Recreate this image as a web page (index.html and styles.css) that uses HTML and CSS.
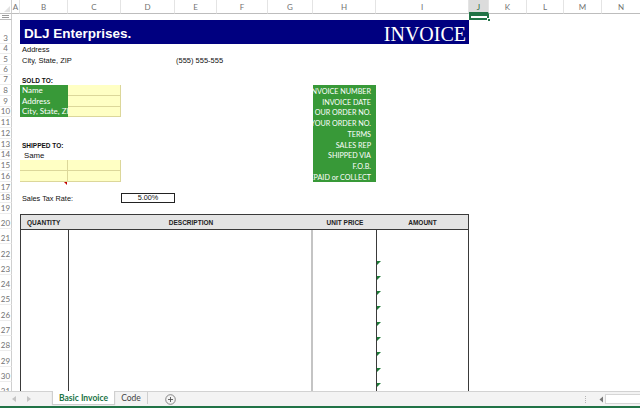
FILE: index.html
```html
<!DOCTYPE html>
<html lang="en">
<head>
<meta charset="UTF-8">
<meta name="viewport" content="width=device-width, initial-scale=1.0">
<title>Basic Invoice</title>
<link rel="stylesheet" href="styles.css">
</head>
<body>
<div class="workbook">
    <div class="sheet">
        <!-- column headers -->
        <div class="corner"></div>
        <div class="colhead">A</div>
        <div class="colhead">B</div>
        <div class="colhead">C</div>
        <div class="colhead">D</div>
        <div class="colhead">E</div>
        <div class="colhead">F</div>
        <div class="colhead">G</div>
        <div class="colhead">H</div>
        <div class="colhead">I</div>
        <div class="colhead active">J</div>
        <div class="colhead">K</div>
        <div class="colhead">L</div>
        <div class="colhead">M</div>
        <div class="colhead">N</div>

        <!-- row headers (rows 1-2 are hidden) -->
        <div class="rowhead hidden-rows"><span class="fold"></span></div>
        <div class="rowhead">3</div>
        <div class="rowhead">4</div>
        <div class="rowhead">5</div>
        <div class="rowhead">6</div>
        <div class="rowhead">7</div>
        <div class="rowhead">8</div>
        <div class="rowhead">9</div>
        <div class="rowhead">10</div>
        <div class="rowhead">11</div>
        <div class="rowhead">12</div>
        <div class="rowhead">13</div>
        <div class="rowhead">14</div>
        <div class="rowhead">15</div>
        <div class="rowhead">16</div>
        <div class="rowhead">17</div>
        <div class="rowhead">18</div>
        <div class="rowhead">19</div>
        <div class="rowhead">20</div>
        <div class="rowhead">21</div>
        <div class="rowhead">22</div>
        <div class="rowhead">23</div>
        <div class="rowhead">24</div>
        <div class="rowhead">25</div>
        <div class="rowhead">26</div>
        <div class="rowhead">27</div>
        <div class="rowhead">28</div>
        <div class="rowhead">29</div>
        <div class="rowhead">30</div>
        <div class="rowhead">31</div>

        <div class="selection"><span class="handle"></span></div>

        <!-- invoice -->
        <div class="title">
            <span class="company">DLJ Enterprises.</span>
            <span class="doc-name">INVOICE</span>
        </div>
        <div class="cell address">Address</div>
        <div class="cell city">City, State, ZIP</div>
        <div class="cell phone">(555) 555-555</div>

        <div class="cell caption sold-head">SOLD TO:</div>
        <div class="entry sold">
            <div class="label">Name</div><div class="input"></div>
            <div class="label">Address</div><div class="input"></div>
            <div class="label">City, State, ZIP</div><div class="input"></div>
        </div>

        <div class="cell caption ship-head">SHIPPED TO:</div>
        <div class="cell ship-same">Same</div>
        <div class="entry ship">
            <div class="input"></div><div class="input"></div>
            <div class="input"></div><div class="input"></div>
        </div>
        <div class="note-mark"></div>

        <div class="cell tax-label">Sales Tax Rate:</div>
        <div class="tax-rate">5.00%</div>

        <div class="details">
            <div class="line"><span>INVOICE NUMBER</span></div>
            <div class="line"><span>INVOICE DATE</span></div>
            <div class="line"><span>OUR ORDER NO.</span></div>
            <div class="line"><span>YOUR ORDER NO.</span></div>
            <div class="line"><span>TERMS</span></div>
            <div class="line"><span>SALES REP</span></div>
            <div class="line"><span>SHIPPED VIA</span></div>
            <div class="line"><span>F.O.B.</span></div>
            <div class="line"><span>PREPAID or COLLECT</span></div>
        </div>

        <div class="items">
            <div class="th qty">QUANTITY</div>
            <div class="th">DESCRIPTION</div>
            <div class="th">UNIT PRICE</div>
            <div class="th">AMOUNT</div>
            <div class="td qty"></div>
            <div class="td desc"></div>
            <div class="td price"></div>
            <div class="td amount">
                <div class="amt"></div>
                <div class="amt"></div>
                <div class="amt flag"></div>
                <div class="amt flag"></div>
                <div class="amt flag"></div>
                <div class="amt flag"></div>
                <div class="amt flag"></div>
                <div class="amt flag"></div>
                <div class="amt flag"></div>
                <div class="amt flag"></div>
                <div class="amt flag"></div>
            </div>
        </div>
    </div>

    <div class="tabbar">
        <div class="tab-nav">
            <svg width="5" height="6" viewBox="0 0 5 6"><path d="M4 0 L0 3 L4 6 Z" fill="#c4c4c4"/></svg>
            <svg width="5" height="6" viewBox="0 0 5 6"><path d="M1 0 L5 3 L1 6 Z" fill="#c4c4c4"/></svg>
        </div>
        <div class="tab active">Basic Invoice</div>
        <div class="tab">Code</div>
        <div class="tab-add">
            <svg width="11" height="11" viewBox="0 0 11 11">
                <circle cx="5.5" cy="5.5" r="4.8" fill="none" stroke="#7a7a7a" stroke-width="0.9"/>
                <path d="M5.5 3 V8 M3 5.5 H8" stroke="#555" stroke-width="0.9"/>
            </svg>
        </div>
        <div class="hscroll">
            <span class="grip"></span>
            <svg width="6" height="9" viewBox="0 0 6 9"><path d="M5 1.5 L1.5 4.5 L5 7.5 Z" fill="#777"/></svg>
            <div class="track"></div>
        </div>
    </div>
    <div class="statusbar"></div>
</div>
</body>
</html>
```

FILE: styles.css
```css
* {
    box-sizing: border-box;
}
html, body {
    margin: 0;
}
body {
    width: 640px;
    height: 408px;
    overflow: hidden;
    background-color: #fff;
    color: #111;
    font-family: "Liberation Sans", Arial, sans-serif;
}
.workbook {
    display: flex;
    flex-direction: column;
    height: 408px;
}

/* sheet grid: row header + columns A..N, rows 1..31 */
.sheet {
    flex: 1;
    min-height: 0;
    overflow: hidden;
    display: grid;
    grid-template-columns: 12px 8px 48px 53px 54px 42px 51px 45px 63px 93px 20px 38px 37px 38px 39px;
    grid-template-rows: 14px 6px 24px repeat(4, 10.25px) repeat(12, 10.75px) 15px repeat(11, 15.3px);
}
.corner,
.colhead {
    grid-row: 1;
}
.corner {
    position: relative;
    border-right: 1px solid #cfcfcf;
    border-bottom: 1px solid #bdbdbd;
}
.corner::after {
    content: "";
    position: absolute;
    right: 1px;
    bottom: 1px;
    border-left: 6px solid transparent;
    border-bottom: 6px solid #e2e2e2;
}
.colhead {
    display: flex;
    align-items: center;
    justify-content: center;
    padding-top: 1px;
    font: 8px "Lato", sans-serif;
    color: #727272;
    border-right: 1px solid #e4e4e4;
    border-bottom: 1px solid #bdbdbd;
}
.colhead.active {
    background-color: #dcdcdc;
    color: #2c6b3f;
    border-bottom: 2px solid #217346;
}
.rowhead {
    grid-column: 1;
    display: flex;
    align-items: flex-end;
    justify-content: center;
    padding-bottom: 1px;
    font: 8px/8px "Lato", sans-serif;
    color: #727272;
    border-right: 1px solid #cfcfcf;
    border-bottom: 1px solid #ececec;
}
.hidden-rows {
    align-items: center;
    border-bottom: 1px solid #bdbdbd;
}
.fold {
    width: 7px;
    height: 3px;
    border-top: 1px solid #9a9a9a;
    border-bottom: 1px solid #9a9a9a;
}
.selection {
    grid-area: 2 / 11 / 3 / 12;
    position: relative;
    border: 2px solid #217346;
}
.handle {
    position: absolute;
    right: -4px;
    bottom: -4px;
    width: 4px;
    height: 4px;
    background-color: #217346;
    border: 1px solid #fff;
}

/* cells */
.cell {
    display: flex;
    align-items: flex-end;
    white-space: nowrap;
    overflow: hidden;
    padding-left: 2px;
    font-size: 7.5px;
    line-height: 9px;
}
.caption {
    font-weight: bold;
    font-size: 6.5px;
}
.title {
    grid-area: 3 / 3 / 4 / 11;
    display: flex;
    justify-content: space-between;
    align-items: flex-end;
    padding: 0 3px 0 4px;
    background-color: #000080;
    color: #fff;
}
.company {
    font: bold 13.5px/1 "Liberation Sans", Arial, sans-serif;
    margin-bottom: 4px;
}
.doc-name {
    font: 20px/1 "Liberation Serif", "Times New Roman", serif;
}
.address { grid-area: 4 / 3 / 5 / 6; }
.city { grid-area: 5 / 3 / 6 / 6; }
.phone { grid-area: 5 / 6 / 6 / 9; padding-left: 1px; }
.sold-head { grid-area: 7 / 3 / 8 / 6; }
.ship-head { grid-area: 13 / 3 / 14 / 6; }
.ship-same { grid-area: 14 / 3 / 15 / 6; padding-left: 4px; font-size: 7.8px; }
.tax-label { grid-area: 18 / 3 / 19 / 5; font-size: 7.3px; }

.entry {
    display: grid;
    grid-template-columns: 48px 53px;
}
.sold {
    grid-area: 8 / 3 / 11 / 5;
    grid-template-rows: repeat(3, 1fr);
}
.ship {
    grid-area: 15 / 3 / 17 / 5;
    grid-template-rows: repeat(2, 1fr);
}
.label {
    display: flex;
    align-items: flex-end;
    padding: 0 0 1px 2px;
    overflow: hidden;
    white-space: nowrap;
    background-color: #389938;
    color: #fff;
    font: 8px/9px "Lato", sans-serif;
}
.input {
    background-color: #ffffc4;
    border-bottom: 1px solid #dcd79a;
    border-right: 1px solid #dcd79a;
}
.note-mark {
    grid-area: 17 / 3 / 18 / 4;
    justify-self: end;
    align-self: start;
    margin-right: 1px;
    border-left: 3px solid transparent;
    border-top: 3px solid #c00000;
}
.tax-rate {
    grid-area: 18 / 5 / 19 / 6;
    display: flex;
    align-items: center;
    justify-content: center;
    border: 1px solid #222;
    font-size: 7.3px;
}

.details {
    grid-area: 8 / 9 / 17 / 10;
    display: flex;
    flex-direction: column;
    background-color: #389938;
    color: #fff;
    font: 7.2px "Lato", sans-serif;
}
.details .line {
    flex: 1;
    display: flex;
    align-items: flex-end;
    justify-content: flex-end;
    overflow: hidden;
    white-space: nowrap;
    padding-right: 5px;
    line-height: 9px;
}
.details .line span {
    flex-shrink: 0;
}

/* line items */
.items {
    grid-area: 20 / 3 / 32 / 11;
    display: grid;
    grid-template-columns: 48px 244px 64px 1fr;
    grid-template-rows: 15px 1fr;
    border: 1px solid #3a3a3a;
}
.th {
    display: flex;
    align-items: center;
    justify-content: center;
    background-color: #e4e4e4;
    border-bottom: 1px solid #3a3a3a;
    font-size: 6.5px;
    font-weight: bold;
    color: #222;
    white-space: nowrap;
}
.th.qty {
    justify-content: flex-start;
    padding-left: 6px;
}
.td.qty {
    border-right: 1px solid #3a3a3a;
}
.td.desc {
    border-right: 2px solid #c4c4c4;
}
.td.price {
    border-right: 1px solid #3a3a3a;
}
.amount {
    display: flex;
    flex-direction: column;
}
.amt {
    height: 15.3px;
    flex-shrink: 0;
    position: relative;
}
.amt.flag::before {
    content: "";
    position: absolute;
    left: 0;
    top: 0;
    border-top: 4px solid #1d7a37;
    border-right: 4px solid transparent;
}

/* sheet tabs */
.tabbar {
    height: 15px;
    flex-shrink: 0;
    display: flex;
    align-items: stretch;
    background-color: #f3f3f3;
    border-top: 1px solid #d2d2d2;
    font-family: "Lato", sans-serif;
}
.tab-nav {
    width: 52px;
    display: flex;
    align-items: center;
    gap: 9px;
    padding-left: 12px;
}
.tab {
    display: flex;
    align-items: center;
    justify-content: center;
    font-size: 8.5px;
    color: #444;
    border-right: 1px solid #cfcfcf;
    margin-bottom: 2px;
}
.tab.active {
    width: 63px;
    background-color: #fff;
    color: #217346;
    font-weight: bold;
    border-left: 1px solid #cfcfcf;
    margin-top: -1px;
    box-shadow: 0 1px 1px rgba(0, 0, 0, 0.15);
}
.tab:not(.active) {
    width: 33px;
}
.tab-add {
    display: flex;
    align-items: center;
    padding-left: 17px;
}
.hscroll {
    margin-left: auto;
    display: flex;
    align-items: center;
}
.grip {
    width: 1px;
    height: 7px;
    margin-right: 12px;
    border-left: 1px dotted #b5b5b5;
}
.track {
    width: 35px;
    height: 10px;
    margin-left: 1px;
    background-color: #fff;
    border: 1px solid #d6d6d6;
    border-right: none;
}
.statusbar {
    height: 2px;
    flex-shrink: 0;
    background-color: #217346;
}
```
